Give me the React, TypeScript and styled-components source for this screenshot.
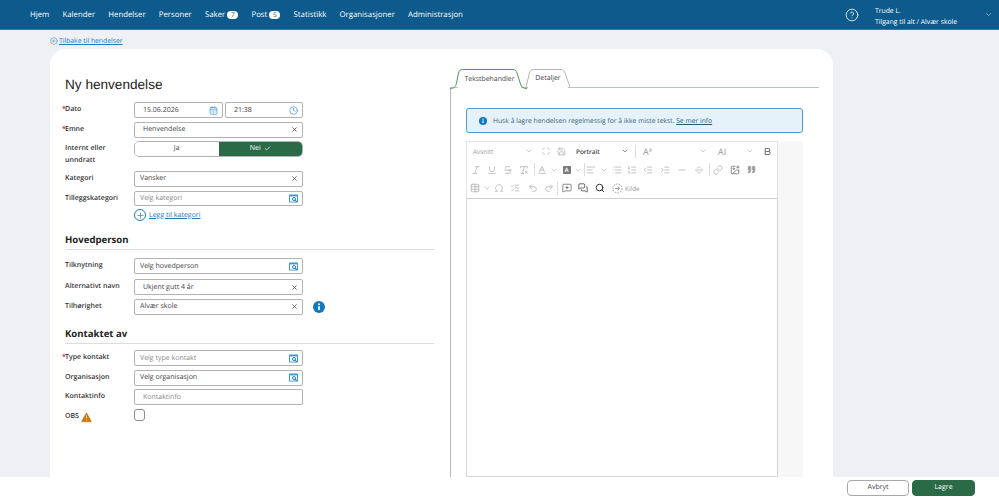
import React from "react";
import styled, { createGlobalStyle } from "styled-components";
import {
  AlignLeft,
  Baseline,
  Bold,
  CalendarDays,
  Check,
  ChevronDown,
  CircleArrowLeft,
  CircleHelp,
  Clock,
  ImagePlus,
  IndentDecrease,
  IndentIncrease,
  Italic,
  Link,
  List,
  ListChecks,
  ListOrdered,
  Maximize,
  MessagesSquare,
  MessageSquarePlus,
  Minus,
  Omega,
  Plus,
  Quote,
  Redo2,
  RemoveFormatting,
  Save,
  Search,
  SeparatorHorizontal,
  Strikethrough,
  Table,
  TriangleAlert,
  Underline,
  Undo2,
  X,
} from "lucide-react";

const GlobalStyle = createGlobalStyle`
  html, body {
    margin: 0;
    padding: 0;
    background: #eff0f5;
    font-family: "Open Sans", "Liberation Sans", sans-serif;
    color: #333;
    text-rendering: geometricPrecision;
  }
  * { box-sizing: border-box; }
`;

const Page = styled.div`
  display: flex;
  flex-direction: column;
  width: 999px;
  height: 501px;
  overflow: hidden;
`;

const Header = styled.header`
  display: flex;
  align-items: center;
  flex: 0 0 30px;
  padding-left: 30px;
  background: #0d5a8c;
  border-bottom: 1px solid #3f7ba3;
  color: #fff;
`;

const Nav = styled.nav`
  display: flex;
  align-items: center;
  gap: 13.2px;
  font-size: 7.8px;
  font-weight: 500;
`;

const NavItem = styled.span`
  display: flex;
  align-items: center;
  gap: 2px;
`;

const Count = styled.span`
  display: inline-block;
  width: 11px;
  height: 8px;
  border-radius: 4px;
  background: #fff;
  color: #0d5a8c;
  font-size: 6.5px;
  line-height: 8px;
  text-align: center;
`;

const UserArea = styled.div`
  display: flex;
  align-items: center;
  margin-left: auto;
  padding-right: 6.5px;
`;

const UserText = styled.div`
  display: flex;
  flex-direction: column;
  width: 108.5px;
  margin-left: 16px;
  padding-top: 2px;
  font-size: 6.8px;
  line-height: 11px;
  font-weight: 500;
  white-space: nowrap;
`;

const Main = styled.main`
  flex: 1;
  display: flex;
  flex-direction: column;
  min-height: 0;
  padding: 4px 0 0 50px;
`;

const BackLink = styled.a`
  display: flex;
  align-items: center;
  gap: 1px;
  height: 13px;
  margin-bottom: 2px;
  font-size: 6.8px;
  color: #1f7cb8;
  text-decoration: underline;
`;

const Card = styled.section`
  flex: 1;
  display: flex;
  width: 783px;
  min-height: 0;
  border-radius: 16px 16px 0 0;
  background: #fff;
`;

const FormColumn = styled.div`
  width: 400px;
  padding: 27px 16px 0 15px;
`;

const Title = styled.h1`
  margin: 0 0 8px;
  height: 18px;
  font-family: "Liberation Sans", Arial, sans-serif;
  font-size: 13.6px;
  line-height: 18px;
  font-weight: 400;
  color: #222;
`;

const Row = styled.div<{ $h?: number; $top?: number }>`
  display: flex;
  height: ${(p) => p.$h ?? 16}px;
  margin-top: ${(p) => p.$top ?? 3.5}px;
`;

const Label = styled.label<{ $required?: boolean }>`
  position: relative;
  width: 69px;
  padding-top: 2px;
  font-size: 7px;
  line-height: 12px;
  font-weight: 600;
  color: #333;
  &::before {
    content: ${(p) => (p.$required ? '"*"' : "none")};
    position: absolute;
    left: -3px;
    color: #c8232c;
  }
`;

const Controls = styled.div`
  display: flex;
  gap: 2px;
  align-items: flex-start;
  height: 100%;
`;

const Field = styled.div<{ $w?: number; $inset?: number; $muted?: boolean }>`
  display: flex;
  align-items: center;
  justify-content: space-between;
  width: ${(p) => p.$w ?? 169}px;
  height: 100%;
  padding: 0 4px 0 ${(p) => p.$inset ?? 8}px;
  border: 1px solid #b3b3b3;
  border-radius: 2px;
  font-size: 7px;
  color: ${(p) => (p.$muted ? "#8a8a8a" : "#444")};
  background: #fff;
`;

const Toggle = styled.div`
  display: flex;
  width: 169px;
  height: 16px;
  border: 1px solid #b3b3b3;
  border-radius: 5px;
  overflow: hidden;
  font-size: 7px;
`;

const ToggleOption = styled.div<{ $active?: boolean }>`
  flex: 1;
  display: flex;
  align-items: center;
  justify-content: center;
  gap: 3px;
  background: ${(p) => (p.$active ? "#2a6a47" : "#fff")};
  color: ${(p) => (p.$active ? "#fff" : "#444")};
`;

const AddLink = styled.a`
  display: flex;
  align-items: center;
  gap: 3px;
  margin-left: 69px;
  margin-top: 3.5px;
  height: 12px;
  font-size: 7px;
  color: #1f7cb8;
  text-decoration: underline;
`;

const AddCircle = styled.span`
  display: flex;
  align-items: center;
  justify-content: center;
  width: 12px;
  height: 12px;
  border: 1px solid #1f7cb8;
  border-radius: 50%;
`;

const SectionTitle = styled.h2<{ $top: number; $bottom: number }>`
  margin: ${(p) => p.$top}px 0 ${(p) => p.$bottom}px;
  padding-bottom: 3px;
  border-bottom: 1px solid #dcdcdc;
  font-size: 9.6px;
  line-height: 13px;
  font-weight: 700;
  color: #222;
`;

const InfoSpot = styled.span`
  display: flex;
  align-items: center;
  align-self: center;
  margin-left: 10px;
`;

const CheckBox = styled.span`
  display: block;
  width: 11px;
  height: 12px;
  border: 1px solid #8c8c8c;
  border-radius: 3px;
  background: #fff;
`;

const ObsLabel = styled.span`
  display: flex;
  align-items: center;
  gap: 1px;
`;

const EditorColumn = styled.div`
  display: flex;
  flex-direction: column;
  width: 369px;
  padding-top: 20px;
`;

const TabBar = styled.div`
  display: flex;
  height: 19px;
  padding-left: 8px;
  gap: 7px;
  border-bottom: 1px solid #a9cfac;
`;

const Tab = styled.div<{ $active?: boolean; $w: number }>`
  position: relative;
  display: flex;
  align-items: center;
  justify-content: center;
  width: ${(p) => p.$w}px;
  height: 19px;
  font-size: 6.9px;
  color: #444;
  background: #fff;
  ${(p) => (p.$active ? "margin-bottom: -1px; height: 20px;" : "")}
`;

const TabOutline = styled.svg`
  position: absolute;
  top: 0;
  left: -7px;
  overflow: visible;
`;

const EditorPane = styled.div`
  flex: 1;
  display: flex;
  flex-direction: column;
  min-height: 0;
  padding: 20px 16px 0 15px;
  border-left: 1px solid #b9b9b9;
`;

const Notice = styled.div`
  display: flex;
  align-items: center;
  gap: 6px;
  height: 25px;
  padding-left: 12px;
  border: 1px solid #4e9cd0;
  border-radius: 3px;
  background: #e6f2fa;
  font-size: 6.75px;
  color: #3b5f78;
  a {
    color: #2a5876;
    text-decoration: underline;
  }
`;

const EditorShell = styled.div`
  flex: 1;
  display: flex;
  flex-direction: column;
  min-height: 0;
  margin-top: 8px;
  padding-right: 25px;
  background: #f7f7f7;
`;

const Toolbar = styled.div`
  display: flex;
  flex-direction: column;
  flex: 0 0 57px;
  border: 1px solid #e4e4e4;
  border-bottom-color: #cfcfcf;
  background: #fff;
`;

const ToolRow = styled.div`
  display: flex;
  align-items: center;
  height: 18.5px;
  padding-left: 1px;
`;

const Tool = styled.span<{ $w: number; $dark?: boolean }>`
  flex: 0 0 ${(p) => p.$w}px;
  display: flex;
  align-items: center;
  justify-content: center;
  color: ${(p) => (p.$dark ? "#333" : "#9a9a9a")};
`;

const ToolDivider = styled.span<{ $w?: number }>`
  flex: 0 0 ${(p) => p.$w ?? 3}px;
  display: flex;
  justify-content: center;
  &::before {
    content: "";
    width: 1px;
    height: 13px;
    background: #dcdcdc;
  }
`;

const ToolText = styled.span<{ $w: number; $dark?: boolean; $size?: number; $pad?: number }>`
  flex: 0 0 ${(p) => p.$w}px;
  padding-left: ${(p) => p.$pad ?? 0}px;
  font-size: ${(p) => p.$size ?? 6.4}px;
  font-weight: ${(p) => (p.$dark ? 600 : 400)};
  color: ${(p) => (p.$dark ? "#444" : "#9a9a9a")};
`;

const BoxedLetter = styled.span`
  display: block;
  width: 8px;
  height: 8px;
  border-radius: 1px;
  background: #7a7a7a;
  color: #eee;
  font-size: 6px;
  line-height: 8px;
  font-weight: 700;
  text-align: center;
`;

const Writing = styled.div`
  flex: 1;
  border: 1px solid #d8d8d8;
  border-top: 0;
  background: #fff;
`;

const Footer = styled.footer`
  flex: 0 0 24px;
  display: flex;
  align-items: center;
  justify-content: flex-end;
  gap: 3px;
  padding: 0 24px 3px 0;
  background: #fff;
`;

const Button = styled.button<{ $primary?: boolean }>`
  width: ${(p) => (p.$primary ? 63 : 62)}px;
  height: 16px;
  padding: 0;
  border: 1px solid ${(p) => (p.$primary ? "#2a6a47" : "#a8a8a8")};
  border-radius: 4px;
  background: ${(p) => (p.$primary ? "#2a6a47" : "#fff")};
  color: ${(p) => (p.$primary ? "#fff" : "#444")};
  font-family: inherit;
  font-size: 7px;
  text-rendering: geometricPrecision;
`;

function LookupIcon() {
  return (
    <svg width="9" height="9" viewBox="0 0 9 9">
      <rect x="0" y="0.5" width="9" height="8" rx="0.8" fill="#3f95d6" />
      <rect x="1" y="2.4" width="7" height="5.2" fill="#fff" />
      <circle cx="5" cy="5" r="1.5" fill="none" stroke="#2a7fc0" strokeWidth="1" />
      <path d="M6 6.1 L7.8 7.9" stroke="#2a7fc0" strokeWidth="1.1" />
    </svg>
  );
}

function InfoBadge({ size }: { size: number }) {
  return (
    <svg width={size} height={size} viewBox="0 0 12 12">
      <circle cx="6" cy="6" r="6" fill="#1379bd" />
      <circle cx="6" cy="3.3" r="1" fill="#fff" />
      <path d="M6 5.2 V9" stroke="#fff" strokeWidth="1.7" />
    </svg>
  );
}

function SourceIcon() {
  return (
    <svg width="11" height="11" viewBox="0 0 11 11" fill="none" stroke="currentColor">
      <circle cx="5.500" cy="5.500" r="4.500" strokeDasharray="1.500 1.200" />
      <path d="M3 5.500 H7.500 M5.800 3.700 L7.600 5.500 L5.800 7.300" />
    </svg>
  );
}

const Clear = () => <X size={7} strokeWidth={3} color="#555" />;
const Chevron = () => <ChevronDown size={8} strokeWidth={1.5} />;

function ToolbarRows() {
  const s = 10;
  const w = 1.4;
  return (
    <Toolbar>
      <ToolRow>
        <ToolText $w={57} $pad={5}>Avsnitt</ToolText>
        <Tool $w={7}><Chevron /></Tool>
        <Tool $w={5} />
        <Tool $w={16}><Maximize size={8} strokeWidth={w} /></Tool>
        <Tool $w={14}><Save size={9} strokeWidth={w} /></Tool>
        <ToolText $w={53} $dark $pad={8}>Portrait</ToolText>
        <Tool $w={7} $dark><Chevron /></Tool>
        <ToolDivider $w={12} />
        <ToolText $w={58} $size={9} $pad={2}>Aª</ToolText>
        <Tool $w={7}><Chevron /></Tool>
        <ToolText $w={39} $size={9} $pad={11}>AI</ToolText>
        <Tool $w={7}><Chevron /></Tool>
        <Tool $w={26}><Bold size={9} strokeWidth={3} color="#777" /></Tool>
      </ToolRow>
      <ToolRow>
        <Tool $w={16}><Italic size={s} strokeWidth={w} /></Tool>
        <Tool $w={16}><Underline size={s} strokeWidth={w} /></Tool>
        <Tool $w={16}><Strikethrough size={s} strokeWidth={w} /></Tool>
        <Tool $w={16}><RemoveFormatting size={s} strokeWidth={w} /></Tool>
        <ToolDivider $w={4} />
        <Tool $w={12}><Baseline size={s} strokeWidth={w} /></Tool>
        <Tool $w={12}><Chevron /></Tool>
        <Tool $w={13}><BoxedLetter>A</BoxedLetter></Tool>
        <Tool $w={10}><Chevron /></Tool>
        <ToolDivider $w={2} />
        <Tool $w={12}><AlignLeft size={s} strokeWidth={w} /></Tool>
        <Tool $w={13}><Chevron /></Tool>
        <Tool $w={14}><List size={s} strokeWidth={w} /></Tool>
        <Tool $w={16}><ListOrdered size={s} strokeWidth={w} /></Tool>
        <Tool $w={16}><IndentDecrease size={s} strokeWidth={w} /></Tool>
        <Tool $w={18}><IndentIncrease size={s} strokeWidth={w} /></Tool>
        <Tool $w={16}><Minus size={s} strokeWidth={w} /></Tool>
        <Tool $w={18}><SeparatorHorizontal size={s} strokeWidth={w} /></Tool>
        <ToolDivider $w={2} />
        <Tool $w={16}><Link size={s} strokeWidth={w} /></Tool>
        <Tool $w={18}><ImagePlus size={s} strokeWidth={2} color="#777" /></Tool>
        <Tool $w={14}><Quote size={9} strokeWidth={1.5} fill="currentColor" /></Tool>
      </ToolRow>
      <ToolRow>
        <Tool $w={13}><Table size={s} strokeWidth={w} /></Tool>
        <Tool $w={11}><Chevron /></Tool>
        <Tool $w={14}><Omega size={s} strokeWidth={w} /></Tool>
        <Tool $w={18}><ListChecks size={s} strokeWidth={w} /></Tool>
        <Tool $w={17}><Undo2 size={s} strokeWidth={w} /></Tool>
        <Tool $w={15}><Redo2 size={s} strokeWidth={w} /></Tool>
        <ToolDivider $w={3} />
        <Tool $w={16} $dark><MessageSquarePlus size={s} strokeWidth={w} /></Tool>
        <Tool $w={16} $dark><MessagesSquare size={s} strokeWidth={1.8} /></Tool>
        <Tool $w={18} $dark><Search size={s} strokeWidth={2.4} /></Tool>
        <Tool $w={16}><SourceIcon /></Tool>
        <ToolText $w={24} $pad={0}>Kilde</ToolText>
      </ToolRow>
    </Toolbar>
  );
}

export default function App() {
  return (
    <Page>
      <GlobalStyle />
      <Header>
        <Nav>
          <NavItem>Hjem</NavItem>
          <NavItem>Kalender</NavItem>
          <NavItem>Hendelser</NavItem>
          <NavItem>Personer</NavItem>
          <NavItem>Saker <Count>7</Count></NavItem>
          <NavItem>Post <Count>5</Count></NavItem>
          <NavItem>Statistikk</NavItem>
          <NavItem>Organisasjoner</NavItem>
          <NavItem>Administrasjon</NavItem>
        </Nav>
        <UserArea>
          <CircleHelp size={14} strokeWidth={1.4} color="#fff" />
          <UserText>
            <span>Trude L.</span>
            <span>Tilgang til alt / Alvær skole</span>
          </UserText>
          <ChevronDown size={9} strokeWidth={1.5} color="#d5e3ee" />
        </UserArea>
      </Header>

      <Main>
        <BackLink>
          <CircleArrowLeft size={8} strokeWidth={1.4} />
          Tilbake til hendelser
        </BackLink>
        <Card>
          <FormColumn>
            <Title>Ny henvendelse</Title>
            <Row $top={0}>
              <Label $required>Dato</Label>
              <Controls>
                <Field $w={89}>
                  15.06.2026
                  <CalendarDays size={9} color="#4a9ad6" />
                </Field>
                <Field $w={78}>
                  21:38
                  <Clock size={9} color="#4a9ad6" />
                </Field>
              </Controls>
            </Row>
            <Row>
              <Label $required>Emne</Label>
              <Field>Henvendelse<Clear /></Field>
            </Row>
            <Row $h={30} $top={3}>
              <Label>Internt eller unndratt</Label>
              <Toggle>
                <ToggleOption>Ja</ToggleOption>
                <ToggleOption $active>
                  Nei <Check size={7} strokeWidth={2.5} />
                </ToggleOption>
              </Toggle>
            </Row>
            <Row $top={0}>
              <Label>Kategori</Label>
              <Field $inset={5}>Vansker<Clear /></Field>
            </Row>
            <Row $top={4} $h={15}>
              <Label>Tilleggskategori</Label>
              <Field $inset={5} $muted>Velg kategori<LookupIcon /></Field>
            </Row>
            <AddLink>
              <AddCircle><Plus size={9} strokeWidth={1.8} color="#1f7cb8" /></AddCircle>
              Legg til kategori
            </AddLink>

            <SectionTitle $top={12} $bottom={8}>Hovedperson</SectionTitle>
            <Row $top={0}>
              <Label>Tilknytning</Label>
              <Field $inset={5}>Velg hovedperson<LookupIcon /></Field>
            </Row>
            <Row $top={5}>
              <Label>Alternativt navn</Label>
              <Field>Ukjent gutt 4 år<Clear /></Field>
            </Row>
            <Row>
              <Label>Tilhørighet</Label>
              <Field $inset={5}>Alvær skole<Clear /></Field>
              <InfoSpot><InfoBadge size={12} /></InfoSpot>
            </Row>

            <SectionTitle $top={12.5} $bottom={6}>Kontaktet av</SectionTitle>
            <Row $top={0}>
              <Label $required>Type kontakt</Label>
              <Field $inset={5} $muted>Velg type kontakt<LookupIcon /></Field>
            </Row>
            <Row>
              <Label>Organisasjon</Label>
              <Field $inset={5}>Velg organisasjon<LookupIcon /></Field>
            </Row>
            <Row>
              <Label>Kontaktinfo</Label>
              <Field $muted>Kontaktinfo</Field>
            </Row>
            <Row>
              <Label>
                <ObsLabel>
                  OBS
                  <TriangleAlert size={13} fill="#c97a12" color="#fff" strokeWidth={1.4} />
                </ObsLabel>
              </Label>
              <CheckBox />
            </Row>
          </FormColumn>

          <EditorColumn>
            <TabBar>
              <Tab $active $w={63}>
                <TabOutline width="77" height="20" fill="none">
                  <path
                    d="M-1 19.500 C3 19.500 4.500 18 5.500 14 L7.500 4 C8 1.500 9.500 0.500 11.500 0.500 H62 C64 0.500 65 1.500 66 4 L69.500 15 C70.500 18 72 19.500 76 19.500"
                    stroke="#4c9a58"
                  />
                </TabOutline>
                Tekstbehandler
              </Tab>
              <Tab $w={40}>
                <TabOutline width="50" height="20" fill="none">
                  <path
                    d="M5 18 L8.500 4 C9 1.500 10.500 0.500 12.500 0.500 H40 C42 0.500 43 1.500 44 4 L49 18"
                    stroke="#b5b5b5"
                  />
                </TabOutline>
                Detaljer
              </Tab>
            </TabBar>
            <EditorPane>
              <Notice>
                <InfoBadge size={8} />
                <span>
                  Husk å lagre hendelsen regelmessig for å ikke miste tekst. <a>Se mer info</a>
                </span>
              </Notice>
              <EditorShell>
                <ToolbarRows />
                <Writing />
              </EditorShell>
            </EditorPane>
          </EditorColumn>
        </Card>
      </Main>

      <Footer>
        <Button>Avbryt</Button>
        <Button $primary>Lagre</Button>
      </Footer>
    </Page>
  );
}
